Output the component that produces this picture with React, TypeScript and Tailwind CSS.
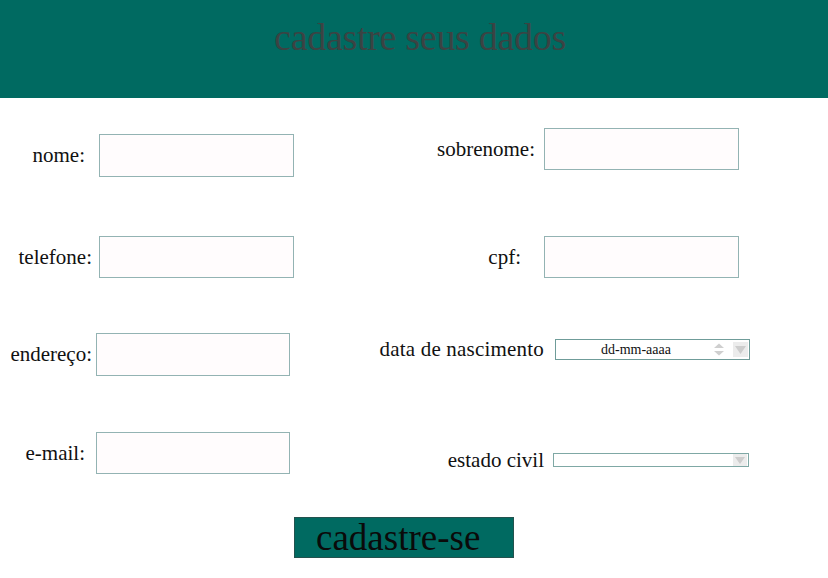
import React from "react";

const serif = { fontFamily: '"Liberation Serif", "DejaVu Serif", serif' };

function TextBox({ w, h }: { w: number; h: number }) {
  return (
    <div
      className="border border-[#93b3b3] bg-[#fffcfd] shrink-0"
      style={{ width: w, height: h }}
    />
  );
}

export default function App() {
  return (
    <div className="w-[828px] h-[578px] bg-white overflow-hidden" style={serif}>
      <header className="h-[98px] bg-[#006a61] flex justify-center">
        <h1 className="text-[38px] leading-none text-[#3b4343] mt-[18px] ml-[12px] tracking-[-0.3px]">
          cadastre seus dados
        </h1>
      </header>

      {/* row 1 */}
      <div className="flex items-start">
        <div className="w-[340px] h-[43px] flex items-center mt-[36px]">
          <div className="w-[99px] pr-[14px] text-right text-[21px] leading-none text-[#111]">nome:</div>
          <TextBox w={195} h={43} />
        </div>
        <div className="h-[42px] flex items-center mt-[30px]">
          <div className="w-[204px] pr-[9px] text-right text-[21px] leading-none text-[#111]">sobrenome:</div>
          <TextBox w={195} h={42} />
        </div>
      </div>

      {/* row 2 */}
      <div className="flex items-start">
        <div className="w-[340px] h-[42px] flex items-center mt-[59px]">
          <div className="w-[99px] pr-[7px] text-right text-[21px] leading-none text-[#111]">telefone:</div>
          <TextBox w={195} h={42} />
        </div>
        <div className="h-[42px] flex items-center mt-[59px]">
          <div className="w-[204px] pr-[23px] text-right text-[21px] leading-none text-[#111]">cpf:</div>
          <TextBox w={195} h={42} />
        </div>
      </div>

      {/* row 3 */}
      <div className="flex items-start">
        <div className="w-[340px] h-[43px] flex items-center mt-[55px]">
          <div className="w-[96px] pr-[4px] text-right text-[21px] leading-none text-[#111] whitespace-nowrap">endereço:</div>
          <TextBox w={194} h={43} />
        </div>
        <div className="h-[21px] flex items-center mt-[61px]">
          <div className="w-[215px] pr-[11px] text-right text-[21px] leading-none text-[#111] whitespace-nowrap tracking-[0.2px]">
            data de nascimento
          </div>
          <div className="w-[195px] h-[21px] border border-[#6f9c99] bg-white flex items-center relative">
            <span className="ml-[45px] text-[14px] leading-none text-[#111]">dd-mm-aaaa</span>
            <svg className="absolute left-[157px] top-[2px]" width="12" height="15" viewBox="0 0 12 15">
              <path d="M1 6 L6 1.5 L11 6 Z" fill="#cfcfcf" />
              <path d="M1 9 L6 13.5 L11 9 Z" fill="#cfcfcf" />
            </svg>
            <div className="absolute right-[1px] top-[2px] w-[15px] h-[15px] bg-[#ececec] flex items-center justify-center">
              <svg width="11" height="8" viewBox="0 0 11 8">
                <path d="M0 0 L11 0 L5.5 8 Z" fill="#cdcdcd" />
              </svg>
            </div>
          </div>
        </div>
      </div>

      {/* row 4 */}
      <div className="flex items-start">
        <div className="w-[340px] h-[42px] flex items-center mt-[56px]">
          <div className="w-[96px] pr-[11px] text-right text-[21px] leading-none text-[#111]">e-mail:</div>
          <TextBox w={194} h={42} />
        </div>
        <div className="h-[14px] flex items-center mt-[77px]">
          <div className="w-[213px] pr-[9px] text-right text-[21px] leading-none text-[#111] whitespace-nowrap">
            estado civil
          </div>
          <div className="w-[196px] h-[14px] border border-[#7fa8a5] bg-white relative">
            <div className="absolute right-[1px] top-[0px] w-[14px] h-[12px] bg-[#ececec] flex items-center justify-center">
              <svg width="10" height="7" viewBox="0 0 10 7">
                <path d="M0 0 L10 0 L5 7 Z" fill="#cdcdcd" />
              </svg>
            </div>
          </div>
        </div>
      </div>

      {/* button */}
      <div className="mt-[43px] ml-[294px]">
        <button className="w-[220px] h-[41px] bg-[#006a61] border border-[#23524e] text-left pl-[21px] text-[37px] leading-none text-[#0a0a0a]">
          cadastre-se
        </button>
      </div>
    </div>
  );
}
